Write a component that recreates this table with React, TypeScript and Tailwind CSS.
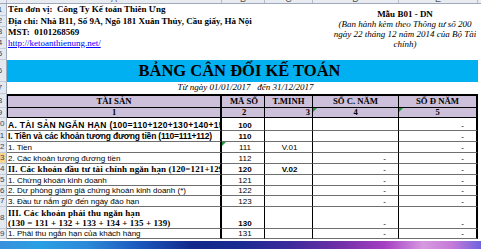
import React from "react"

const sans = "font-['Liberation_Sans',Arial,sans-serif]"
const serif = "font-['Liberation_Serif','Times_New_Roman',serif]"

type BodyRow = {
  n: number
  h: string
  label: string[]
  kind: "reg" | "bold" | "serif"
  track?: string
  code: string
  codeBold?: boolean
  tm?: string
  tmBold?: boolean
  c?: string
  d?: string
  flag?: boolean
}

const bodyRows: BodyRow[] = [
  { n: 10, h: "h-[13px]", label: ["A. TÀI SẢN NGẮN HẠN (100=110+120+130+140+150)"], kind: "bold", track: "tracking-[0.3px]", code: "100", codeBold: true, d: "-" },
  { n: 11, h: "h-[11px]", label: ["I. Tiền và các khoản tương đương tiền (110=111+112)"], kind: "bold", track: "tracking-[-0.2px]", code: "110", codeBold: true, d: "-" },
  { n: 12, h: "h-[11px]", label: ["1. Tiền"], kind: "reg", code: "111", tm: "V.01", d: "-", flag: true },
  { n: 13, h: "h-[11px]", label: ["2. Các khoản tương đương tiền"], kind: "reg", code: "112", c: "-", d: "-" },
  { n: 14, h: "h-[11px]", label: ["II. Các khoản đầu tư tài chính ngắn hạn (120=121+129)"], kind: "serif", track: "tracking-[0.1px]", code: "120", codeBold: true, tm: "V.02", tmBold: true, c: "-", d: "-" },
  { n: 15, h: "h-[11px]", label: ["1. Chứng khoán kinh doanh"], kind: "reg", code: "121", c: "-", d: "-" },
  { n: 16, h: "h-[10px]", label: ["2. Dự phòng giảm giá chứng khoán kinh doanh (*)"], kind: "reg", code: "122", c: "-", d: "-" },
  { n: 17, h: "h-[11px]", label: ["3. Đầu tư nắm giữ đến ngày đáo hạn"], kind: "reg", code: "123", c: "-", d: "-" },
  { n: 18, h: "h-[22px]", label: ["III. Các khoản phải thu ngắn hạn", "(130 = 131 + 132 + 133 + 134 + 135 + 139)"], kind: "serif", track: "tracking-[0.1px]", code: "130", codeBold: true, c: "-", d: "-" },
  { n: 19, h: "h-[10px]", label: ["1. Phải thu ngắn hạn của khách hàng"], kind: "reg", code: "131", c: "-", d: "-" },
]

const labelFont = {
  reg: `${sans} text-[8px]`,
  bold: `${sans} text-[8.5px] font-bold`,
  serif: `${serif} text-[9px] font-bold`,
}

function RowHead({ n, h }: { n: number; h: string }) {
  return (
    <div
      className={`w-[7px] shrink-0 overflow-hidden border-r border-b border-r-[#9eaabb] border-b-[#c3ccd8] ${
        n === 13 ? "bg-[#f7d48e]" : "bg-[#e4e9f0]"
      } ${h} flex items-center`}
    >
      <div className={`w-[20px] shrink-0 -ml-[10px] text-center ${sans} text-[8px] leading-none text-[#3b4552]`}>{n}</div>
    </div>
  )
}

function Flag() {
  return <span className="absolute left-0 top-0 w-0 h-0 border-t-[4px] border-r-[4px] border-t-[#1f9a3c] border-r-transparent" />
}

export default function App() {
  return (
    <div className="w-[481px] h-[249px] overflow-hidden bg-white text-black">
      {/* column letters */}
      <div className="flex h-[4px] bg-[#e8ecf1] border-b border-[#9eaabb] overflow-hidden">
        {[
          ["w-[7px]", ""],
          ["w-[215px]", "A"],
          ["w-[43px]", "B"],
          ["w-[48px]", "C"],
          ["w-[86px]", "D"],
          ["w-[79px]", "E"],
        ].map(([w, l]) => (
          <div key={w + l} className={`${w} shrink-0 h-[4px] border-r border-[#b3bdca] flex items-end justify-center`}>
            <span className={`${sans} text-[9px] leading-[9px] text-[#555]`}>{l}</span>
          </div>
        ))}
      </div>

      {/* top area */}
      <div className="flex">
        <div className="flex flex-col">
          <RowHead n={1} h="h-[12px]" />
          <RowHead n={2} h="h-[11px]" />
          <RowHead n={3} h="h-[11px]" />
          <RowHead n={4} h="h-[11px]" />
          <RowHead n={5} h="h-[11px]" />
          <RowHead n={6} h="h-[22px]" />
          <RowHead n={7} h="h-[12px]" />
        </div>
        <div className="w-[474px] flex flex-col">
          <div className="h-[56px] flex">
            <div className={`flex flex-col pl-[1px] ${serif} text-[9px] font-bold whitespace-pre`}>
              <div className="h-[12px] flex items-center">Tên đơn vị:  Công Ty Kế toán Thiên Ưng</div>
              <div className="h-[11px] flex items-center">Địa chỉ: Nhà B11, Số 9A, Ngõ 181 Xuân Thủy, Cầu giấy, Hà Nội</div>
              <div className="h-[11px] flex items-center">MST:  0101268569</div>
              <div className="h-[11px] flex items-center font-normal text-[#0000ff] underline">http://ketoanthienung.net/</div>
            </div>
            <div className={`ml-auto mr-[3px] w-[146px] pt-[5px] text-center ${serif} text-[9px] leading-[10px] whitespace-nowrap`}>
              <div className="font-bold">Mẫu B01 - DN</div>
              <div className="italic">(Ban hành kèm theo Thông tư số 200</div>
              <div className="italic">ngày 22 tháng 12 năm 2014 của Bộ Tài</div>
              <div className="italic">chính)</div>
            </div>
          </div>
          <div className="h-[22px] w-[471px] bg-[#00b0f0] flex items-center justify-center pr-[6px]">
            <span className={`${serif} text-[16.5px] font-bold leading-none`}>BẢNG CÂN ĐỐI KẾ TOÁN</span>
          </div>
          <div className={`h-[12px] w-[471px] flex items-center justify-center pl-[6px] ${serif} italic text-[9px] whitespace-pre`}>
            Từ ngày 01/01/2017   đến 31/12/2017
          </div>
        </div>
      </div>

      {/* header row 1 */}
      <div className="flex h-[14px]">
        <RowHead n={8} h="h-[14px]" />
        <div className={`grid grid-cols-[215px_43px_48px_86px_79px] bg-[#ccc0da] ${serif} text-[8.7px] font-bold`}>
          <div className="h-[14px] border-l border-t-2 border-r-2 border-b border-black flex items-center justify-center">TÀI SẢN</div>
          <div className="h-[14px] border-t-2 border-r border-b border-black flex items-center justify-center pl-[2px]">MÃ SỐ</div>
          <div className="h-[14px] border-t-2 border-r border-b border-black flex items-center justify-center">T.MINH</div>
          <div className="h-[14px] border-t-2 border-r border-b border-black flex items-center justify-center">SỐ C. NĂM</div>
          <div className="h-[14px] border-t-2 border-r-2 border-b border-black flex items-center justify-center">SỐ Đ NĂM</div>
        </div>
      </div>

      {/* header row 2 */}
      <div className="flex h-[10px]">
        <RowHead n={9} h="h-[10px]" />
        <div className={`grid grid-cols-[215px_43px_48px_86px_79px] bg-[#ccc0da] ${serif} text-[8.5px] font-bold leading-none`}>
          <div className="h-[10px] border-l border-r-2 border-b border-black flex items-center justify-center">1</div>
          <div className="h-[10px] border-r border-b border-black flex items-center justify-center pl-[2px]">2</div>
          <div className="h-[10px] border-r border-b border-black flex items-center justify-end pr-[2px]">3</div>
          <div className="relative h-[10px] border-r border-b border-black flex items-center justify-center">
            <Flag />4
          </div>
          <div className="relative h-[10px] border-r-2 border-b border-black flex items-center justify-center">
            <Flag />5
          </div>
        </div>
      </div>

      {/* body */}
      {bodyRows.map((r) => (
        <div key={r.n} className={`flex ${r.h}`}>
          <RowHead n={r.n} h={r.h} />
          <div className="grid grid-cols-[215px_43px_48px_86px_79px]">
            <div
              className={`${r.h} border-r-2 border-r-black border-b border-b-[#6f6f6f] pl-[1px] overflow-hidden whitespace-nowrap flex flex-col justify-end ${labelFont[r.kind]} ${r.track ?? ""} ${
                r.label.length > 1 ? "leading-[10px]" : "leading-[7px] pb-[1px]"
              }`}
            >
              {r.label.map((l) => (
                <div key={l}>{l}</div>
              ))}
            </div>
            <div
              className={`relative ${r.h} border-r border-r-black border-b border-b-[#6f6f6f] flex items-end justify-center pl-[4px] pb-[1px] ${sans} text-[8px] leading-[7px] ${
                r.codeBold ? "font-bold" : ""
              }`}
            >
              {r.flag && <Flag />}
              {r.code}
            </div>
            <div
              className={`${r.h} border-r border-r-black border-b border-b-[#6f6f6f] flex items-end justify-center pl-[2px] pb-[1px] ${sans} text-[8px] leading-[7px] ${
                r.tmBold ? "font-bold" : ""
              }`}
            >
              {r.tm}
            </div>
            <div className={`${r.h} border-r border-r-black border-b border-b-[#6f6f6f] flex items-end justify-end pr-[12px] pb-[1px] ${sans} text-[8px] leading-[7px]`}>
              {r.c}
            </div>
            <div className={`${r.h} border-r-2 border-r-black border-b border-b-[#6f6f6f] flex items-end justify-end pr-[12px] pb-[1px] ${sans} text-[8px] leading-[7px]`}>
              {r.d}
            </div>
          </div>
        </div>
      ))}

      {/* desktop strip below the window */}
      <div className="mt-[2px] h-[8px] bg-[linear-gradient(90deg,#3a8fdc_0%,#2aa0e4_8%,#2d8ad8_18%,#1d5cc0_28%,#12288a_40%,#1a2a90_50%,#3b2a9c_60%,#6d2ea6_70%,#a53fc4_80%,#d79ae0_88%,#c57ad8_94%,#6f63de_100%)]" />
    </div>
  )
}
